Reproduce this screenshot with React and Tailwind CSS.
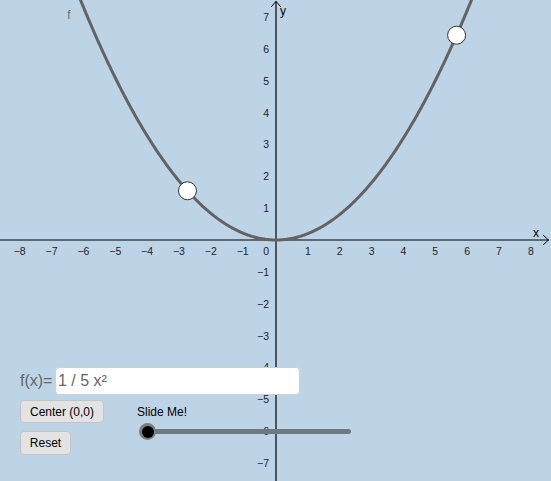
import React from "react";

const O = { x: 276, y: 240 };
const U = 31.85;

function Graph() {
  const pts = [];
  for (let px = 60; px <= 490; px += 1) {
    const x = (px - O.x) / U;
    const y = (x * x) / 5;
    const py = O.y - y * U;
    pts.push(`${px},${py.toFixed(2)}`);
  }
  const xs = [-8, -7, -6, -5, -4, -3, -2, -1, 1, 2, 3, 4, 5, 6, 7, 8];
  const ys = [7, 6, 5, 4, 3, 2, 1, -1, -2, -3, -4, -5, -6, -7];
  const p1x = -2.78, p2x = 5.67;
  return (
    <svg
      className="absolute inset-0"
      width="551"
      height="481"
      viewBox="0 0 551 481"
      style={{ fontFamily: '"Liberation Sans", Arial, sans-serif' }}
    >
      <line x1="0" y1={O.y} x2="549" y2={O.y} stroke="#000" strokeWidth="1.2" />
      <polyline points="543,235 548.5,240 543,245" fill="none" stroke="#000" strokeWidth="1" />
      <line x1={O.x} y1="481" x2={O.x} y2="1" stroke="#000" strokeWidth="1.2" />
      <polyline points="271,7 276,1.5 281,7" fill="none" stroke="#000" strokeWidth="1" />
      <text x="536" y="237" fontSize="12" textAnchor="middle" fill="#000">x</text>
      <text x="283" y="15" fontSize="12" textAnchor="middle" fill="#000">y</text>
      {xs.map((v) => (
        <text key={"x" + v} x={O.x + v * U - (v < 0 ? 1.5 : 0)} y="254.5" fontSize="10.5" textAnchor="middle" fill="#222">
          {v < 0 ? "\u2212" + -v : v}
        </text>
      ))}
      <text x="269" y="254.5" fontSize="10.5" textAnchor="end" fill="#222">0</text>
      {ys.map((v) => (
        <text key={"y" + v} x="269" y={O.y - v * U + 4} fontSize="10.5" textAnchor="end" fill="#222">
          {v < 0 ? "\u2212" + -v : v}
        </text>
      ))}
      <polyline points={pts.join(" ")} fill="none" stroke="#636363" strokeWidth="3" />
      <text x="69" y="19" fontSize="12" textAnchor="middle" fill="#707070">f</text>
      <circle cx={O.x + p1x * U} cy={O.y - ((p1x * p1x) / 5) * U} r="9" fill="#fff" stroke="#333" strokeWidth="1" />
      <circle cx={O.x + p2x * U} cy={O.y - ((p2x * p2x) / 5) * U} r="9" fill="#fff" stroke="#333" strokeWidth="1" />
    </svg>
  );
}

export default function App() {
  return (
    <div
      className="relative w-[551px] h-[481px] overflow-hidden bg-[#bdd4e7]"
      style={{ fontFamily: '"Liberation Sans", Arial, sans-serif' }}
    >
      <Graph />
      <div className="absolute left-[20px] top-[367px] flex flex-col">
        <div className="flex items-center h-[28px]">
          <span className="text-[16px] text-[#666] leading-none w-[35px]">f(x)=</span>
          <div className="w-[245px] h-[28px] bg-white border border-[#d0d0d0] rounded-[4px] flex items-center pl-[2px] text-[16px] text-[#666]">
            1 / 5 x²
          </div>
        </div>
        <div className="flex mt-[5px]">
          <div className="flex flex-col gap-[8px] w-[84px]">
            <button className="w-[84px] h-[23px] bg-[#e3e3e3] border border-[#c4c4c4] rounded-[4px] text-[12px] text-black leading-none flex items-center justify-center">
              Center (0,0)
            </button>
            <button className="w-[51px] h-[24px] bg-[#e3e3e3] border border-[#c4c4c4] rounded-[4px] text-[12px] text-black leading-none flex items-center justify-center">
              Reset
            </button>
          </div>
          <div className="flex flex-col ml-[33px] mt-[5px]">
            <span className="text-[12px] leading-[14px] text-black">Slide Me!</span>
            <div className="relative mt-[3px] ml-[2px] w-[212px] h-[18px] flex items-center">
              <div className="ml-[8px] w-[204px] h-[5px] rounded-full bg-[#6e7982]" />
              <div className="absolute left-0 top-[1px] w-[17px] h-[17px] rounded-full bg-[#7d7d7d] flex items-center justify-center">
                <div className="w-[12px] h-[12px] rounded-full bg-black" />
              </div>
            </div>
          </div>
        </div>
      </div>
    </div>
  );
}
